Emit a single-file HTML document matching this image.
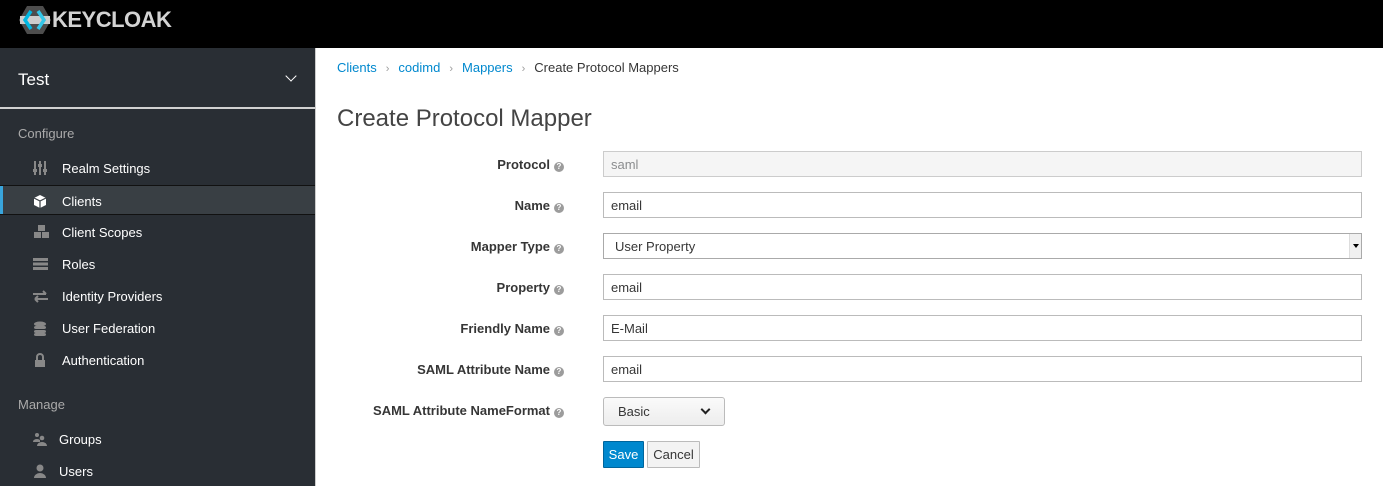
<!DOCTYPE html>
<html><head><meta charset="utf-8"><style>
*{box-sizing:border-box;margin:0;padding:0}
body{width:1383px;height:486px;overflow:hidden;font-family:"Liberation Sans",sans-serif;font-size:13px;color:#363636;background:#fff;position:relative}
.hdr{position:absolute;left:0;top:0;width:1383px;height:48px;background:#000}
.side{position:absolute;left:0;top:48px;width:316px;height:438px;background:#292e34;border-right:1px solid #ccc}
.realm{height:61px;border-bottom:2px solid #d1d1d1;color:#fff;font-size:17px;padding:22px 0 0 18px;position:relative}
.sec{color:#aaa;font-size:13px;padding-left:18px;position:absolute}
.it{position:absolute;left:0;width:315px;height:30px;color:#fff;font-size:13px;line-height:31px;padding-left:62px}
.it svg{position:absolute;left:33px;top:8px}
.act{background:#393f44;border-top:1px solid #111;border-bottom:1px solid #111}
.act:before{content:"";position:absolute;left:0;top:0;bottom:0;width:3px;background:#39a5dc}
.bc{position:absolute;left:337px;top:60px;font-size:13px;color:#363636}
.bc a{color:#0088ce;text-decoration:none}
.bc .s{color:#9c9c9c;margin:0 9px;font-size:11px}
h1{position:absolute;left:337px;top:105px;font-size:24px;font-weight:normal;color:#444}
.lbl{position:absolute;right:819px;font-weight:bold;font-size:13px;text-align:right;white-space:nowrap}
.q{display:inline-block;width:10px;height:10px;border-radius:50%;background:#9c9c9c;color:#fff;font-size:8px;line-height:10px;text-align:center;margin-left:4px;vertical-align:0px}
.inp{position:absolute;left:603px;width:759px;height:26px;border:1px solid #bbb;padding:0 7px;line-height:26px;font-size:13px}
.btn{position:absolute;height:27px;line-height:25px;font-size:13px;border:1px solid #bbb;border-radius:1px}
</style></head><body>
<div class="hdr">
<svg style="position:absolute;left:18px;top:5px" width="34" height="30" viewBox="0 0 34 30"><polygon points="9,1 25,1 33,15 25,29 9,29 1,15" fill="#4d4d4d"/><rect x="2" y="11" width="30" height="8" fill="#ccc"/><path d="M13 6 L7 15 L13 24" stroke="#00b8e3" stroke-width="3.5" fill="none"/><path d="M20 6 L26 15 L20 24" stroke="#33c6e9" stroke-width="3.5" fill="none"/></svg>
<div style="position:absolute;left:52px;top:7px;color:#d3d3d3;font-weight:bold;font-size:22px;letter-spacing:-0.5px">KEYCLOAK</div>
</div>
<div class="side">
<div class="realm">Test<span style="position:absolute;right:20px;top:24px;width:8px;height:8px;border-right:1.5px solid #fff;border-bottom:1.5px solid #fff;transform:rotate(45deg)"></span></div>
<div class="sec" style="top:78px">Configure</div>
<div class="it" style="top:105px"><svg width="14" height="14"><g fill="#888"><rect x="1" y="0" width="2" height="14"/><rect x="6" y="0" width="2" height="14"/><rect x="11" y="0" width="2" height="14"/><rect x="0" y="8" width="4" height="3"/><rect x="5" y="3" width="4" height="3"/><rect x="10" y="8" width="4" height="3"/></g></svg>Realm Settings</div>
<div class="it act" style="top:137px"><svg width="14" height="14"><polygon points="7,1 13,4 13,11 7,14 1,11 1,4" fill="#fff"/><path d="M1 4 L7 7 L13 4 M7 7 V14" stroke="#393f44" stroke-width="1.2" fill="none"/></svg>Clients</div>
<div class="it" style="top:169px"><svg width="18" height="14"><g fill="#888"><rect x="5" y="0" width="7" height="6"/><rect x="1" y="7" width="7" height="6"/><rect x="9" y="7" width="7" height="6"/></g></svg>Client Scopes</div>
<div class="it" style="top:201px"><svg width="15" height="14"><g fill="#888"><rect x="0" y="1" width="15" height="3"/><rect x="0" y="5.5" width="15" height="3"/><rect x="0" y="10" width="15" height="3"/></g></svg>Roles</div>
<div class="it" style="top:233px"><svg width="15" height="14"><path d="M0 5 H13 M10 2 L13 5 M15 10 H2 M5 7 L2 10 M5 13 L2 10" stroke="#888" stroke-width="2" fill="none"/></svg>Identity Providers</div>
<div class="it" style="top:265px"><svg width="14" height="15"><g fill="#888"><ellipse cx="7" cy="3" rx="6" ry="2.5"/><rect x="1" y="5" width="12" height="3" rx="2"/><rect x="1" y="9" width="12" height="3" rx="2"/><rect x="1" y="12" width="12" height="3" rx="2"/></g></svg>User Federation</div>
<div class="it" style="top:297px"><svg width="14" height="14"><path d="M4 7 V4 a3 3 0 0 1 6 0 V7" stroke="#888" stroke-width="2" fill="none"/><rect x="2" y="7" width="10" height="7" fill="#888"/></svg>Authentication</div>
<div class="sec" style="top:349px">Manage</div>
<div class="it" style="top:376px;padding-left:59px"><svg width="14" height="14"><g fill="#888"><circle cx="4" cy="3" r="2"/><circle cx="9" cy="6" r="2.3"/><path d="M0 10 a4 3 0 0 1 7 -2 V10Z"/><path d="M4 14 a5 4 0 0 1 10 0Z"/></g></svg>Groups</div>
<div class="it" style="top:408px;padding-left:59px"><svg width="14" height="14"><g fill="#888"><circle cx="7" cy="4" r="3.5"/><path d="M1 14 a6 5 0 0 1 12 0Z"/></g></svg>Users</div>
</div>
<div class="bc"><a>Clients</a><span class="s">›</span><a>codimd</a><span class="s">›</span><a>Mappers</a><span class="s">›</span>Create Protocol Mappers</div>
<h1>Create Protocol Mapper</h1>

<div class="lbl" style="top:157px">Protocol<span class="q">?</span></div>
<div class="inp" style="top:151px;background:#f5f5f5;color:#8b8d8f;border-color:#ccc">saml</div>
<div class="lbl" style="top:198px">Name<span class="q">?</span></div>
<div class="inp" style="top:192px">email</div>
<div class="lbl" style="top:239px">Mapper Type<span class="q">?</span></div>
<div class="inp" style="top:233px;padding-left:11px;border-color:#aaa">User Property<span style="position:absolute;right:0;top:0;width:12px;height:24px;background:#f0f0f0;border-left:1px solid #ddd"><span style="position:absolute;left:3px;top:10px;border-left:3px solid transparent;border-right:3px solid transparent;border-top:4px solid #000"></span></span></div>
<div class="lbl" style="top:280px">Property<span class="q">?</span></div>
<div class="inp" style="top:274px">email</div>
<div class="lbl" style="top:321px">Friendly Name<span class="q">?</span></div>
<div class="inp" style="top:315px">E-Mail</div>
<div class="lbl" style="top:362px">SAML Attribute Name<span class="q">?</span></div>
<div class="inp" style="top:356px">email</div>
<div class="lbl" style="top:403px">SAML Attribute NameFormat<span class="q">?</span></div>
<div class="btn" style="left:603px;top:397px;width:122px;height:29px;line-height:27px;padding-left:14px;background:linear-gradient(#fafafa,#ededed);border-radius:3px">Basic<span style="position:absolute;right:15px;top:8px;width:7px;height:7px;border-right:2px solid #222;border-bottom:2px solid #222;transform:rotate(45deg)"></span></div>
<div class="btn" style="left:603px;top:441px;width:41px;background:#0088ce;border-color:#00659c;color:#fff;text-align:center">Save</div>
<div class="btn" style="left:647px;top:441px;width:53px;background:#f3f3f3;text-align:center">Cancel</div>
</body></html>
